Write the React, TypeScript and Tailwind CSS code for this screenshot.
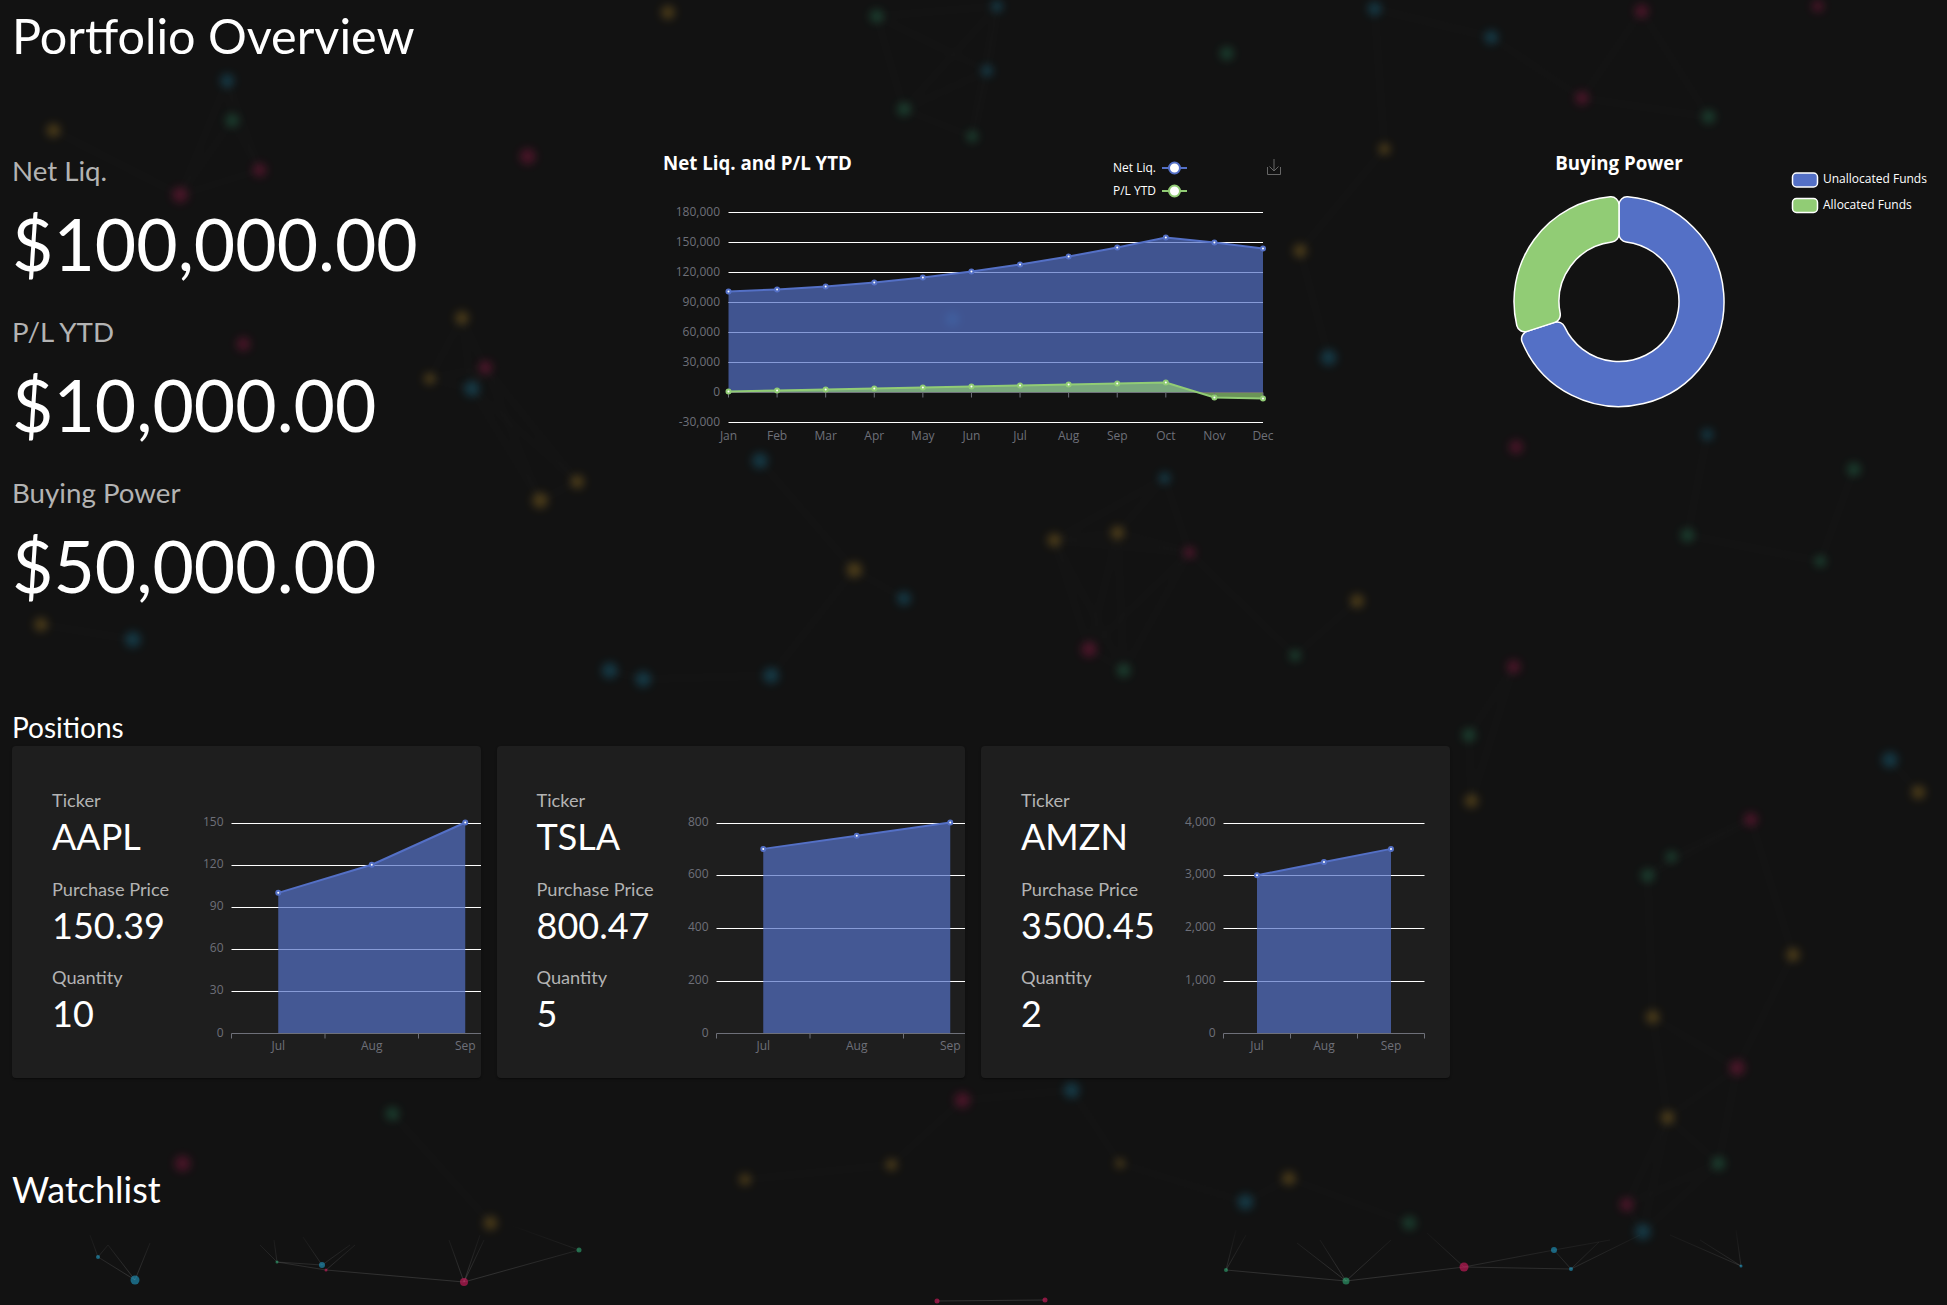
const SCALE = 1947 / 1568;

const NODE_COLORS: Record<string, string> = {
  y: "#d9a32b",
  b: "#1f9cc7",
  g: "#2fa873",
  r: "#d81b60",
};

// background particles, picked off the shrunk reference
const NODES: [string, number, number, number][] = [
  ["y", 538, 10, 5], ["y", 43, 105, 5], ["y", 372, 256, 5], ["y", 346, 305, 4], ["y", 465, 388, 5], ["y", 435, 403, 6],
  ["y", 688, 459, 6], ["y", 849, 435, 5], ["y", 900, 429, 5], ["y", 1047, 202, 5], ["y", 1115, 120, 4], ["y", 1093, 484, 5],
  ["y", 1331, 819, 5], ["y", 1444, 769, 5], ["y", 1545, 638, 5], ["y", 1185, 645, 5], ["y", 33, 503, 5], ["y", 1038, 949, 5],
  ["y", 1343, 900, 5], ["y", 395, 985, 5], ["y", 600, 950, 4], ["y", 718, 938, 4], ["y", 902, 937, 3],
  ["b", 1107, 7, 5], ["b", 1201, 30, 5], ["b", 183, 65, 5], ["b", 380, 313, 6], ["b", 612, 371, 6], ["b", 1070, 288, 6],
  ["b", 1375, 350, 4], ["b", 491, 540, 6], ["b", 518, 547, 6], ["b", 621, 544, 6], ["b", 107, 515, 6], ["b", 728, 482, 5],
  ["b", 938, 385, 4], ["b", 1522, 612, 6], ["b", 863, 878, 6], ["b", 1003, 968, 6], ["b", 1323, 992, 6], ["b", 803, 5, 4],
  ["b", 795, 57, 4], ["b", 767, 257, 5],
  ["g", 706, 13, 5], ["g", 988, 43, 5], ["g", 728, 88, 5], ["g", 783, 110, 4], ["g", 187, 97, 5], ["g", 1376, 94, 5],
  ["g", 1493, 378, 5], ["g", 1359, 431, 5], ["g", 1466, 452, 4], ["g", 905, 540, 5], ["g", 1183, 592, 5], ["g", 1346, 690, 4],
  ["g", 1327, 705, 5], ["g", 1043, 528, 4], ["g", 316, 897, 5], ["g", 1384, 937, 5], ["g", 1135, 985, 5],
  ["r", 1322, 9, 5], ["r", 1464, 5, 4], ["r", 1274, 79, 5], ["r", 425, 126, 6], ["r", 209, 137, 5], ["r", 145, 157, 6],
  ["r", 196, 277, 5], ["r", 391, 296, 5], ["r", 1221, 360, 5], ["r", 958, 445, 4], ["r", 877, 523, 6], ["r", 1219, 537, 5],
  ["r", 1410, 660, 5], ["r", 1399, 860, 6], ["r", 775, 886, 6], ["r", 147, 937, 6], ["r", 1310, 970, 5],
];

const SHARP_NODES: [string, number, number, number][] = [
  ["b", 98, 1257, 2], ["b", 135, 1280, 4.5], ["g", 277, 1262, 1.5], ["b", 322, 1265, 3], ["r", 326, 1270, 1.5],
  ["r", 464, 1282, 4], ["g", 579, 1250, 2.5], ["r", 937, 1301, 2.5], ["r", 1045, 1300, 2.5], ["g", 1226, 1270, 2],
  ["g", 1346, 1281, 3.5], ["r", 1464, 1267, 4.5], ["b", 1554, 1250, 3], ["b", 1571, 1269, 2], ["b", 1741, 1266, 1.5],
];

const SHARP_LINES: number[][] = [
  [98, 1257, 135, 1280], [98, 1257, 108, 1245], [108, 1245, 135, 1280], [98, 1257, 90, 1235], [135, 1280, 150, 1243],
  [277, 1262, 322, 1265], [277, 1262, 326, 1270], [277, 1262, 274, 1240], [277, 1262, 260, 1245], [322, 1265, 303, 1237],
  [322, 1265, 350, 1245], [326, 1270, 355, 1245], [326, 1270, 464, 1282], [464, 1282, 449, 1240], [464, 1282, 484, 1240],
  [464, 1282, 480, 1235], [464, 1282, 579, 1250], [579, 1250, 510, 1225], [937, 1301, 1045, 1300], [1226, 1270, 1346, 1281],
  [1226, 1270, 1236, 1230], [1226, 1270, 1246, 1235], [1346, 1281, 1464, 1267], [1346, 1281, 1297, 1243], [1346, 1281, 1320, 1240],
  [1346, 1281, 1391, 1240], [1464, 1267, 1427, 1233], [1464, 1267, 1571, 1269], [1464, 1267, 1554, 1250], [1554, 1250, 1571, 1269],
  [1554, 1250, 1610, 1240], [1571, 1269, 1599, 1242], [1571, 1269, 1640, 1235], [1741, 1266, 1670, 1235], [1741, 1266, 1700, 1240],
  [1741, 1266, 1736, 1230],
];

const blurred = NODES.map(([c, x, y, r]) => ({ c, x: x * SCALE, y: y * SCALE, r }));

// faint links between particles that sit close together
const links: number[][] = [];
blurred.forEach((a, i) => {
  blurred.slice(i + 1).forEach((b) => {
    if (Math.hypot(a.x - b.x, a.y - b.y) < 150) links.push([a.x, a.y, b.x, b.y]);
  });
});

function ParticleField() {
  return (
    <svg className="absolute inset-0 w-full h-full pointer-events-none" viewBox="0 0 1947 1305">
      <defs>
        <filter id="soft" x="-100%" y="-100%" width="300%" height="300%">
          <feGaussianBlur stdDeviation="4.5" />
        </filter>
        <filter id="softer" filterUnits="userSpaceOnUse" x="0" y="0" width="1947" height="1305">
          <feGaussianBlur stdDeviation="3" />
        </filter>
        <linearGradient id="fade" gradientUnits="userSpaceOnUse" x1="0" y1="1225" x2="0" y2="1275">
          <stop offset="0" stopColor="#fff" stopOpacity="0" />
          <stop offset="1" stopColor="#fff" stopOpacity="0.13" />
        </linearGradient>
      </defs>
      <g stroke="#fff" strokeOpacity="0.012" strokeWidth="3" filter="url(#softer)">
        {links.map((l, i) => (
          <line key={i} x1={l[0]} y1={l[1]} x2={l[2]} y2={l[3]} />
        ))}
      </g>
      <g filter="url(#soft)" opacity="0.27">
        {blurred.map((n, i) => (
          <circle key={i} cx={n.x} cy={n.y} r={n.r + 2} fill={NODE_COLORS[n.c]} />
        ))}
      </g>
      <g stroke="url(#fade)" strokeWidth="1">
        {SHARP_LINES.map((l, i) => (
          <line key={i} x1={l[0]} y1={l[1]} x2={l[2]} y2={l[3]} />
        ))}
      </g>
      <g opacity="0.6">
        {SHARP_NODES.map(([c, x, y, r], i) => (
          <circle key={i} cx={x} cy={y} r={r} fill={NODE_COLORS[c]} />
        ))}
      </g>
    </svg>
  );
}

const MONTHS = ["Jan", "Feb", "Mar", "Apr", "May", "Jun", "Jul", "Aug", "Sep", "Oct", "Nov", "Dec"];
const NET_LIQ = [101, 103, 106, 110, 115, 121, 128, 136, 145, 155, 150, 144];
const PL_YTD = [1, 2, 3, 4, 5, 6, 7, 8, 9, 10, -5, -6];
const Y_TICKS = [180, 150, 120, 90, 60, 30, 0, -30];

const chartX = (i: number) => 728.5 + (i * 534.5) / 11;
const chartY = (v: number) => 392.5 - v;

const toPoints = (values: number[]) => values.map((v, i) => `${chartX(i)},${chartY(v)}`).join(" ");
const toArea = (values: number[]) => `${chartX(0)},392.5 ${toPoints(values)} ${chartX(11)},392.5`;

function Marker({ x, y, color }: { x: number; y: number; color: string }) {
  return <circle cx={x} cy={y} r="2" fill="#fff" stroke={color} strokeWidth="2" />;
}

function LegendLine({ y, color, label }: { y: number; color: string; label: string }) {
  return (
    <g>
      <text x="1156" y={y + 1} textAnchor="end" dominantBaseline="middle" fill="#fff" fontSize="12">
        {label}
      </text>
      <line x1="1162" y1={y} x2="1187" y2={y} stroke={color} strokeWidth="2" />
      <circle cx="1174.5" cy={y} r="5.5" fill="#fff" stroke={color} strokeWidth="2" />
    </g>
  );
}

function NetLiqChart() {
  return (
    <svg
      className="w-[649px] h-[400px] shrink-0 font-['Open_Sans',sans-serif]"
      viewBox="649 120 649 400"
    >
      <text x="663" y="165" dominantBaseline="middle" fill="#fff" fontSize="18.7" fontWeight="700">
        Net Liq. and P/L YTD
      </text>
      <LegendLine y={168} color="#5470c6" label="Net Liq." />
      <LegendLine y={191} color="#91cc75" label="P/L YTD" />
      <path
        d="M1267.5 167V174.5H1280.5V167M1274 159V171M1269.5 166.5L1274 171L1278.5 166.5"
        fill="none"
        stroke="#666"
        strokeWidth="1"
      />
      {Y_TICKS.map((v) => (
        <g key={v}>
          {v !== 0 && (
            <line x1="728.5" x2="1263" y1={chartY(v)} y2={chartY(v)} stroke="#fff" strokeWidth="1" />
          )}
          <text x="720" y={chartY(v)} textAnchor="end" dominantBaseline="middle" fill="#6e7079" fontSize="12">
            {v === 0 ? "0" : `${v < 0 ? "-" : ""}${Math.abs(v)},000`}
          </text>
        </g>
      ))}
      <polygon points={toArea(NET_LIQ)} fill="#5470c6" fillOpacity="0.7" />
      <polygon points={toArea(PL_YTD)} fill="#91cc75" fillOpacity="0.7" />
      <line x1="728.5" x2="1263" y1="392.5" y2="392.5" stroke="#6e7079" strokeWidth="1" />
      {MONTHS.map((m, i) => (
        <g key={m}>
          <line x1={chartX(i)} x2={chartX(i)} y1="392.5" y2="397.5" stroke="#6e7079" strokeWidth="1" />
          <text x={chartX(i)} y="437" textAnchor="middle" dominantBaseline="middle" fill="#6e7079" fontSize="12">
            {m}
          </text>
        </g>
      ))}
      <polyline points={toPoints(NET_LIQ)} fill="none" stroke="#5470c6" strokeWidth="2" />
      <polyline points={toPoints(PL_YTD)} fill="none" stroke="#91cc75" strokeWidth="2" />
      {NET_LIQ.map((v, i) => (
        <Marker key={i} x={chartX(i)} y={chartY(v)} color="#5470c6" />
      ))}
      {PL_YTD.map((v, i) => (
        <Marker key={i} x={chartX(i)} y={chartY(v)} color="#91cc75" />
      ))}
    </svg>
  );
}

// annular sector with rounded corners, angles clockwise from 12 o'clock
function sectorPath(cx: number, cy: number, r0: number, r1: number, a0: number, a1: number, c: number) {
  const p = (r: number, a: number) => {
    const t = (a * Math.PI) / 180;
    return `${(cx + r * Math.sin(t)).toFixed(2)} ${(cy - r * Math.cos(t)).toFixed(2)}`;
  };
  const dOut = (Math.asin(c / (r1 - c)) * 180) / Math.PI;
  const dIn = (Math.asin(c / (r0 + c)) * 180) / Math.PI;
  const edgeOut = Math.sqrt((r1 - c) ** 2 - c ** 2);
  const edgeIn = Math.sqrt((r0 + c) ** 2 - c ** 2);
  const large = a1 - a0 > 180 ? 1 : 0;
  return [
    `M${p(edgeOut, a0)}`,
    `A${c} ${c} 0 0 1 ${p(r1, a0 + dOut)}`,
    `A${r1} ${r1} 0 ${large} 1 ${p(r1, a1 - dOut)}`,
    `A${c} ${c} 0 0 1 ${p(edgeOut, a1)}`,
    `L${p(edgeIn, a1)}`,
    `A${c} ${c} 0 0 1 ${p(r0, a1 - dIn)}`,
    `A${r0} ${r0} 0 ${large} 0 ${p(r0, a0 + dIn)}`,
    `A${c} ${c} 0 0 1 ${p(edgeIn, a0)}`,
    "Z",
  ].join(" ");
}

function BuyingPowerChart() {
  return (
    <svg
      className="w-[649px] h-[400px] shrink-0 font-['Open_Sans',sans-serif]"
      viewBox="1298 120 649 400"
    >
      <text x="1619" y="165" textAnchor="middle" dominantBaseline="middle" fill="#fff" fontSize="18.7" fontWeight="700">
        Buying Power
      </text>
      <path d={sectorPath(1619, 301.5, 60, 105, 0, 252, 8)} fill="#5470c6" stroke="#fff" strokeWidth="1.5" />
      <path d={sectorPath(1619, 301.5, 60, 105, 252, 360, 8)} fill="#91cc75" stroke="#fff" strokeWidth="1.5" />
      <rect x="1792.5" y="173" width="25" height="14" rx="4" fill="#5470c6" stroke="#fff" strokeWidth="1.5" />
      <text x="1823" y="180" dominantBaseline="middle" fill="#fff" fontSize="12">
        Unallocated Funds
      </text>
      <rect x="1792.5" y="198.5" width="25" height="14" rx="4" fill="#91cc75" stroke="#fff" strokeWidth="1.5" />
      <text x="1823" y="206" dominantBaseline="middle" fill="#fff" fontSize="12">
        Allocated Funds
      </text>
    </svg>
  );
}

type Position = {
  ticker: string;
  price: string;
  quantity: string;
  ticks: string[];
  max: number;
  values: number[];
  left: number;
  step: number;
};

const POSITIONS: Position[] = [
  { ticker: "AAPL", price: "150.39", quantity: "10", ticks: ["0", "30", "60", "90", "120", "150"], max: 150, values: [100, 120, 150], left: 219.5, step: 93.5 },
  { ticker: "TSLA", price: "800.47", quantity: "5", ticks: ["0", "200", "400", "600", "800"], max: 800, values: [700, 750, 800], left: 219.5, step: 93.5 },
  { ticker: "AMZN", price: "3500.45", quantity: "2", ticks: ["0", "1,000", "2,000", "3,000", "4,000"], max: 4000, values: [3000, 3250, 3500], left: 242.5, step: 67 },
];

const MINI_MONTHS = ["Jul", "Aug", "Sep"];
const MINI_TOP = 76.5;
const MINI_ZERO = 287.5;

function PositionChart({ p }: { p: Position }) {
  const y = (v: number) => MINI_ZERO - (v / p.max) * (MINI_ZERO - MINI_TOP);
  const x = (i: number) => p.left + p.step * (i + 0.5);
  const right = p.left + p.step * 3;
  const line = p.values.map((v, i) => `${x(i)},${y(v)}`).join(" ");
  return (
    <svg className="w-[301px] h-full shrink-0 font-['Open_Sans',sans-serif]" viewBox="168 0 301 332">
      {p.ticks.map((t, i) => {
        const ty = Math.round(MINI_ZERO - (i * (MINI_ZERO - MINI_TOP)) / (p.ticks.length - 1)) + 0.5;
        return (
          <g key={t}>
            {i > 0 && <line x1={p.left} x2={right} y1={ty} y2={ty} stroke="#fff" strokeWidth="1" />}
            <text x={p.left - 8} y={ty - 1} textAnchor="end" dominantBaseline="middle" fill="#6e7079" fontSize="12">
              {t}
            </text>
          </g>
        );
      })}
      <polygon points={`${x(0)},${MINI_ZERO} ${line} ${x(2)},${MINI_ZERO}`} fill="#5470c6" fillOpacity="0.7" />
      <line x1={p.left} x2={right} y1={MINI_ZERO} y2={MINI_ZERO} stroke="#6e7079" strokeWidth="1" />
      {[0, 1, 2, 3].map((i) => (
        <line
          key={i}
          x1={p.left + p.step * i}
          x2={p.left + p.step * i}
          y1={MINI_ZERO}
          y2={MINI_ZERO + 5}
          stroke="#6e7079"
          strokeWidth="1"
        />
      ))}
      {MINI_MONTHS.map((m, i) => (
        <text key={m} x={x(i)} y="301" textAnchor="middle" dominantBaseline="middle" fill="#6e7079" fontSize="12">
          {m}
        </text>
      ))}
      <polyline points={line} fill="none" stroke="#5470c6" strokeWidth="2" />
      {p.values.map((v, i) => (
        <Marker key={i} x={x(i)} y={y(v)} color="#5470c6" />
      ))}
    </svg>
  );
}

function PositionCard({ p }: { p: Position }) {
  const rows = [
    ["Ticker", p.ticker],
    ["Purchase Price", p.price],
    ["Quantity", p.quantity],
  ];
  return (
    <div className="flex w-[468.5px] h-[332px] rounded bg-[#1e1e1e] overflow-hidden shadow-[0_2px_1px_-1px_rgba(0,0,0,0.2),0_1px_1px_0_rgba(0,0,0,0.14),0_1px_3px_0_rgba(0,0,0,0.12)]">
      <div className="w-[168px] shrink-0 pl-10 pt-10 flex flex-col gap-[16.5px]">
        {rows.map(([label, value]) => (
          <div key={label} className="whitespace-nowrap">
            <div className="text-[18.2px] leading-[28px] mb-px text-[#b3b3b3]">{label}</div>
            <div className="text-[36px] leading-[43px] text-white">{value}</div>
          </div>
        ))}
      </div>
      <PositionChart p={p} />
    </div>
  );
}

const STATS = [
  ["Net Liq.", "$100,000.00"],
  ["P/L YTD", "$10,000.00"],
  ["Buying Power", "$50,000.00"],
];

export default function App() {
  return (
    <div className="relative w-full h-[1305px] overflow-hidden bg-[#121212] font-['Lato',sans-serif] text-white">
      <ParticleField />
      <div className="relative">
        <h1 className="pl-3 pt-1.5 text-[48.5px] leading-[58px] font-normal">Portfolio Overview</h1>
        <div className="flex mt-14">
          <div className="w-[649px] shrink-0 pl-3 pt-[34px] flex flex-col gap-7">
            {STATS.map(([label, value]) => (
              <div key={label}>
                <div className="text-[27.7px] leading-[34px] text-[#b3b3b3] mb-[13px]">{label}</div>
                <div className="text-[71.4px] leading-[86px]">{value}</div>
              </div>
            ))}
          </div>
          <NetLiqChart />
          <BuyingPowerChart />
        </div>
        <h2 className="pl-3 mt-[101px] text-[28px] leading-[34px] font-normal mb-[2px]">Positions</h2>
        <div className="flex gap-4 pl-3">
          {POSITIONS.map((p) => (
            <PositionCard key={p.ticker} p={p} />
          ))}
        </div>
        <h2 className="pl-3 mt-[91px] text-[36px] leading-[41px] font-normal">Watchlist</h2>
      </div>
    </div>
  );
}
